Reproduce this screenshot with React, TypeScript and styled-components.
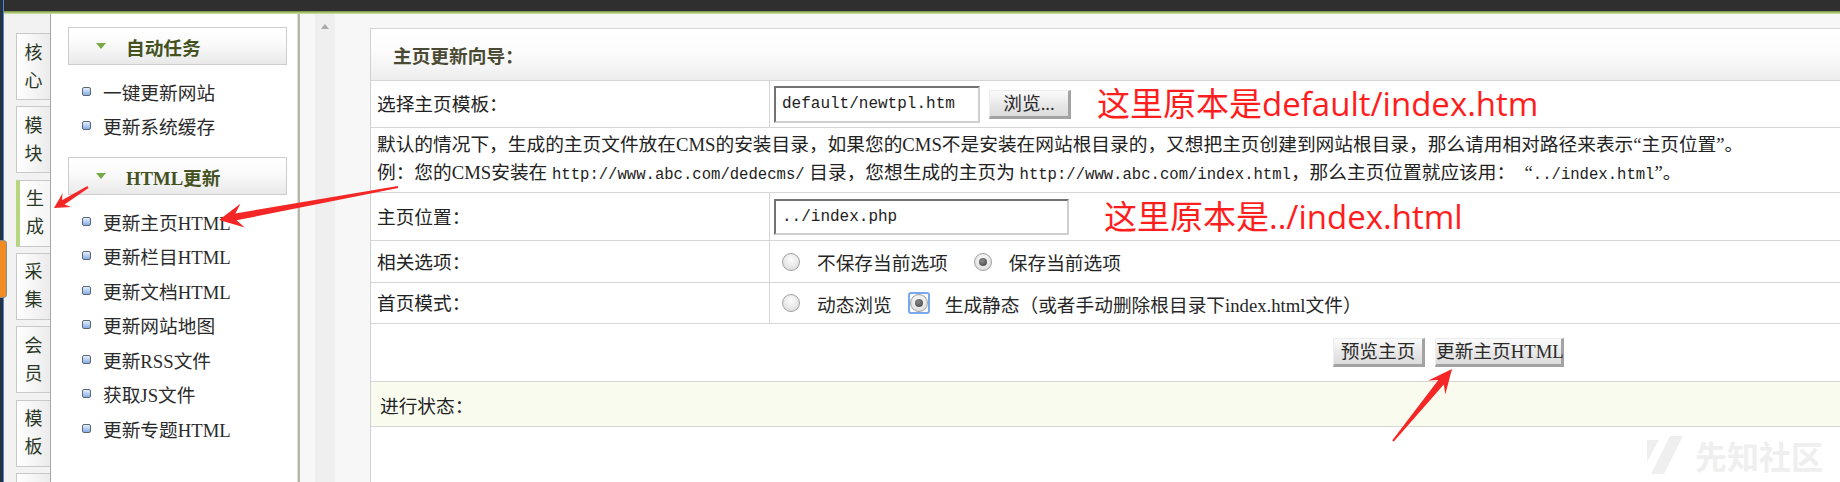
import React from "react";
import styled, { createGlobalStyle } from "styled-components";

const GlobalStyle = createGlobalStyle`
  html, body {
    margin: 0;
    padding: 0;
    overflow: hidden;
  }
  body {
    background: #f7f7f7;
    font-family: "Liberation Serif", "Noto Sans CJK SC", serif;
    font-size: 18.7px;
    color: #222;
  }
`;

const Page = styled.div`
  position: relative;
  display: flex;
  width: 1840px;
  height: 482px;
  overflow: hidden;
`;

const EdgeStrip = styled.div`
  flex: none;
  width: 3px;
  background: #263240;
  border-right: 1px solid #4b8ad0;
  display: flex;
  flex-direction: column;
`;

const Handle = styled.div`
  position: relative;
  z-index: 1;
  flex: none;
  margin-top: 240px;
  width: 6px;
  height: 56px;
  background: #f08c22;
  border: 1px solid #8c8c8c;
  border-left: none;
  border-radius: 0 4px 4px 0;
`;

const Content = styled.div`
  flex: 1;
  display: flex;
  flex-direction: column;
  min-width: 0;
`;

const TopBar = styled.div`
  flex: none;
  height: 14px;
  background: linear-gradient(
    to bottom,
    #2f2f2f 0,
    #2f2f2f 11px,
    #6f8d3c 11px,
    #a3c06c 12.5px,
    #d3e3ae 14px
  );
`;

const Body = styled.div`
  flex: 1;
  display: flex;
  min-height: 0;
`;

const TabColumn = styled.div`
  flex: none;
  box-sizing: border-box;
  width: 46px;
  padding: 19px 0 0 12px;
  background: #f2f2f2;
  display: flex;
  flex-direction: column;
  gap: 6.33px;
  overflow: hidden;
`;

const Tab = styled.div<{ $active?: boolean }>`
  flex: none;
  box-sizing: border-box;
  width: 34px;
  height: 67px;
  border: 1px solid #c9c9c9;
  border-right: none;
  border-left: ${(p) => (p.$active ? "4px solid #b7d67f" : "1px solid #c9c9c9")};
  background: ${(p) =>
    p.$active
      ? "linear-gradient(to right, #ffffff, #f4f4f4)"
      : "linear-gradient(to right, #ffffff, #ebebeb)"};
  display: flex;
  flex-direction: column;
  align-items: center;
  justify-content: center;
  font-size: 18px;
  line-height: 28px;
  color: #2c3826;
`;

const MenuPanel = styled.div`
  flex: none;
  box-sizing: border-box;
  width: 250px;
  padding: 13px 11px 0 17px;
  background: #fff;
  border-left: 1px solid #a6a6a6;
  border-right: 2px solid #b8b8a8;
  box-shadow: inset -1px 0 0 #dcdcd0;
`;

const GroupTitle = styled.div`
  box-sizing: border-box;
  height: 38px;
  border: 1px solid #cdcdcd;
  background: linear-gradient(to bottom, #ffffff, #fbfbfb 40%, #e9e9e9);
  display: flex;
  align-items: center;
  gap: 20px;
  padding-left: 27px;
  font-weight: 700;
  color: #44521f;
`;

const Caret = styled.span`
  width: 0;
  height: 0;
  border-left: 5px solid transparent;
  border-right: 5px solid transparent;
  border-top: 6px solid #79a946;
`;

const MenuList = styled.ul`
  list-style: none;
  margin: 8.75px 0 14.25px;
  padding: 0;
`;

const MenuItem = styled.li`
  height: 34.5px;
  display: flex;
  align-items: center;
  gap: 12px;
  padding-left: 14px;
  color: #2a2a2a;
`;

const Bullet = styled.span`
  flex: none;
  box-sizing: border-box;
  width: 9px;
  height: 9px;
  border: 1px solid #5d6672;
  border-radius: 2px;
  background: linear-gradient(to bottom, #e4efff, #86aee6);
`;

const Gutter = styled.div`
  flex: none;
  width: 70px;
  box-sizing: border-box;
  padding-left: 15px;
  background: #f7f7f7;
  display: flex;
`;

const Track = styled.div`
  width: 20px;
  background: #efefef;
  display: flex;
  justify-content: center;
  padding-top: 10px;
  box-sizing: border-box;
`;

const UpArrow = styled.span`
  width: 0;
  height: 0;
  border-left: 4.5px solid transparent;
  border-right: 4.5px solid transparent;
  border-bottom: 5px solid #a9a9a9;
`;

const Main = styled.div`
  flex: 1;
  min-width: 0;
  padding-top: 14px;
  background: #f7f7f7;
  display: flex;
  flex-direction: column;
`;

const Table = styled.div`
  flex: 1;
  background: #fff;
  border-left: 1px solid #d0d0d0;
  border-top: 1px solid #d6d6d6;
`;

const Row = styled.div<{ $h: number }>`
  box-sizing: border-box;
  height: ${(p) => p.$h}px;
  border-bottom: 1px solid #d6d6d6;
`;

const HeaderRow = styled(Row)`
  display: flex;
  align-items: center;
  padding-left: 22px;
  background: linear-gradient(to bottom, #ffffff, #fcfcfc 45%, #ededed);
  font-weight: 700;
  color: #4a4a34;
`;

const FieldRow = styled(Row)`
  display: grid;
  grid-template-columns: 399px 1fr;
`;

const Label = styled.div`
  border-right: 1px solid #d6d6d6;
  padding-left: 6px;
  display: flex;
  align-items: center;
  padding-bottom: 3px;
`;

const Value = styled.div`
  display: flex;
  align-items: center;
  padding-left: 4px;
  white-space: nowrap;
`;

const DescRow = styled(Row)`
  display: flex;
  flex-direction: column;
  justify-content: center;
  padding-left: 6px;
  line-height: 28px;
  white-space: nowrap;
`;

const Mono = styled.span`
  font-family: "Liberation Mono", monospace;
  font-size: 15.6px;
`;

const ButtonRow = styled(Row)`
  display: flex;
  align-items: center;
  gap: 10px;
  padding-left: 962px;
`;

const StatusRow = styled(Row)`
  display: flex;
  align-items: center;
  padding-left: 9px;
  background: #f9fbef;
`;

const TextInput = styled.input<{ $w: number; $h: number }>`
  box-sizing: border-box;
  width: ${(p) => p.$w}px;
  height: ${(p) => p.$h}px;
  padding: 0 6px;
  margin: 0;
  border: 2px solid;
  border-color: #737373 #cfcfcf #cfcfcf #737373;
  background: #fff;
  font-family: "Liberation Mono", monospace;
  font-size: 16px;
  color: #222;
  outline: none;
`;

const PlainButton = styled.button<{ $w: number; $gap?: number }>`
  box-sizing: border-box;
  width: ${(p) => p.$w}px;
  height: 29px;
  margin: 0 0 0 ${(p) => p.$gap ?? 0}px;
  padding: 0;
  border-style: solid;
  border-width: 1px 3px 3px 1px;
  border-color: #ececec #a3a3a3 #a3a3a3 #ececec;
  background: linear-gradient(to bottom, #fbfbfb, #e6e6e6 60%, #dcdcdc);
  font-family: "Liberation Serif", "Noto Sans CJK SC", serif;
  font-size: 18.7px;
  color: #2a2a2a;
  line-height: 25px;
  white-space: nowrap;
`;

const Note = styled.span<{ $gap: number }>`
  margin-left: ${(p) => p.$gap}px;
  font-family: "Open Sans", "Noto Sans CJK SC", sans-serif;
  font-size: 33px;
  line-height: 40px;
  color: #ff1d1d;
`;

const Option = styled.label<{ $first?: boolean; $after?: number }>`
  display: flex;
  align-items: center;
  gap: 17px;
  margin-left: ${(p) => (p.$first ? 8 : 0)}px;
  margin-right: ${(p) => p.$after ?? 26}px;
`;

const FocusRing = styled.span`
  flex: none;
  box-sizing: border-box;
  width: 22px;
  height: 22px;
  margin: 0 -2px;
  border: 2px solid #7aa8ec;
  border-radius: 3px;
  display: flex;
  align-items: center;
  justify-content: center;
`;

const RadioMark = styled.span<{ $checked?: boolean }>`
  position: relative;
  flex: none;
  box-sizing: border-box;
  width: 18px;
  height: 18px;
  border-radius: 50%;
  border: 1px solid #a0a0a0;
  background: radial-gradient(circle at 50% 35%, #fdfdfd, #d6d6d6);
  &::after {
    content: "";
    display: ${(p) => (p.$checked ? "block" : "none")};
    position: absolute;
    left: 4px;
    top: 4px;
    width: 8px;
    height: 8px;
    border-radius: 50%;
    background: radial-gradient(circle at 40% 35%, #8a8a8a, #3e3e3e);
  }
`;

const OptionText = styled.span`
  color: #262626;
`;

const Overlay = styled.svg`
  position: absolute;
  left: 0;
  top: 0;
  pointer-events: none;
`;

const Watermark = styled.div`
  position: absolute;
  left: 1647px;
  top: 436px;
  display: flex;
  align-items: center;
  gap: 12px;
  font-family: "Noto Sans CJK SC", sans-serif;
  font-size: 32px;
  font-weight: 700;
  line-height: 38px;
  color: #efefef;
  pointer-events: none;
`;

function arrowPoints(
  tx: number,
  ty: number,
  px: number,
  py: number,
  w0: number,
  w1: number,
  hl: number,
  hw: number
) {
  const dx = px - tx;
  const dy = py - ty;
  const len = Math.hypot(dx, dy);
  const ux = dx / len;
  const uy = dy / len;
  const nx = -uy;
  const ny = ux;
  const jx = px - ux * hl * 0.72;
  const jy = py - uy * hl * 0.72;
  const bx = px - ux * hl;
  const by = py - uy * hl;
  const pts = [
    [tx + (nx * w0) / 2, ty + (ny * w0) / 2],
    [jx + (nx * w1) / 2, jy + (ny * w1) / 2],
    [bx + nx * hw, by + ny * hw],
    [px, py],
    [bx - nx * hw, by - ny * hw],
    [jx - (nx * w1) / 2, jy - (ny * w1) / 2],
    [tx - (nx * w0) / 2, ty - (ny * w0) / 2],
  ];
  return pts.map((p) => p.map((v) => v.toFixed(1)).join(",")).join(" ");
}

const tabs = [
  ["核", "心"],
  ["模", "块"],
  ["生", "成"],
  ["采", "集"],
  ["会", "员"],
  ["模", "板"],
  [],
];

const menuGroups = [
  { title: "自动任务", items: ["一键更新网站", "更新系统缓存"] },
  {
    title: "HTML更新",
    items: [
      "更新主页HTML",
      "更新栏目HTML",
      "更新文档HTML",
      "更新网站地图",
      "更新RSS文件",
      "获取JS文件",
      "更新专题HTML",
    ],
  },
];

export default function App() {
  return (
    <>
      <GlobalStyle />
      <Page>
        <EdgeStrip>
          <Handle />
        </EdgeStrip>
        <Content>
          <TopBar />
          <Body>
            <TabColumn>
              {tabs.map((t, i) => (
                <Tab key={i} $active={i === 2}>
                  {t.map((c) => (
                    <span key={c}>{c}</span>
                  ))}
                </Tab>
              ))}
            </TabColumn>
            <MenuPanel>
              {menuGroups.map((g) => (
                <React.Fragment key={g.title}>
                  <GroupTitle>
                    <Caret />
                    <span>{g.title}</span>
                  </GroupTitle>
                  <MenuList>
                    {g.items.map((it) => (
                      <MenuItem key={it}>
                        <Bullet />
                        <span>{it}</span>
                      </MenuItem>
                    ))}
                  </MenuList>
                </React.Fragment>
              ))}
            </MenuPanel>
            <Gutter>
              <Track>
                <UpArrow />
              </Track>
            </Gutter>
            <Main>
              <Table>
                <HeaderRow $h={52}>主页更新向导：</HeaderRow>
                <FieldRow $h={47}>
                  <Label>选择主页模板：</Label>
                  <Value>
                    <TextInput $w={206} $h={37} defaultValue="default/newtpl.htm" readOnly />
                    <PlainButton $w={82} $gap={9}>浏览...</PlainButton>
                    <Note $gap={26}>这里原本是default/index.htm</Note>
                  </Value>
                </FieldRow>
                <DescRow $h={65}>
                  <div>
                    默认的情况下，生成的主页文件放在CMS的安装目录，如果您的CMS不是安装在网站根目录的，又想把主页创建到网站根目录，那么请用相对路径来表示“主页位置”。
                  </div>
                  <div>
                    例：您的CMS安装在 <Mono>http://www.abc.com/dedecms/</Mono> 目录，您想生成的主页为{" "}
                    <Mono>http://www.abc.com/index.html</Mono>，那么主页位置就应该用：&nbsp; “
                    <Mono>../index.html</Mono>”。
                  </div>
                </DescRow>
                <FieldRow $h={48}>
                  <Label>主页位置：</Label>
                  <Value>
                    <TextInput $w={295} $h={36} defaultValue="../index.php" readOnly />
                    <Note $gap={35}>这里原本是../index.html</Note>
                  </Value>
                </FieldRow>
                <FieldRow $h={42}>
                  <Label>相关选项：</Label>
                  <Value>
                    <Option $first>
                      <RadioMark />
                      <OptionText>不保存当前选项</OptionText>
                    </Option>
                    <Option>
                      <RadioMark $checked />
                      <OptionText>保存当前选项</OptionText>
                    </Option>
                  </Value>
                </FieldRow>
                <FieldRow $h={41}>
                  <Label>首页模式：</Label>
                  <Value>
                    <Option $first $after={18}>
                      <RadioMark />
                      <OptionText>动态浏览</OptionText>
                    </Option>
                    <Option>
                      <FocusRing>
                        <RadioMark $checked />
                      </FocusRing>
                      <OptionText>生成静态（或者手动删除根目录下index.html文件）</OptionText>
                    </Option>
                  </Value>
                </FieldRow>
                <ButtonRow $h={58}>
                  <PlainButton $w={92}>预览主页</PlainButton>
                  <PlainButton $w={129}>更新主页HTML</PlainButton>
                </ButtonRow>
                <StatusRow $h={45}>进行状态：</StatusRow>
              </Table>
            </Main>
          </Body>
        </Content>

        <Overlay width={1840} height={482} viewBox="0 0 1840 482">
          <polygon points={arrowPoints(398, 187, 219, 220, 2, 7, 24, 12)} fill="#f42626" />
          <polygon points={arrowPoints(88, 187, 54, 208, 2, 5, 15, 8)} fill="#f42626" />
          <polygon points={arrowPoints(1393, 441, 1452, 369, 2, 7, 24, 11)} fill="#f42626" />
        </Overlay>

        <Watermark>
          <svg width="36" height="38" viewBox="0 0 36 38">
            <polygon points="0,4 12,4 0,26" fill="#efefef" />
            <polygon points="4,38 17,38 36,0 23,0" fill="#efefef" />
          </svg>
          <span>先知社区</span>
        </Watermark>
      </Page>
    </>
  );
}
